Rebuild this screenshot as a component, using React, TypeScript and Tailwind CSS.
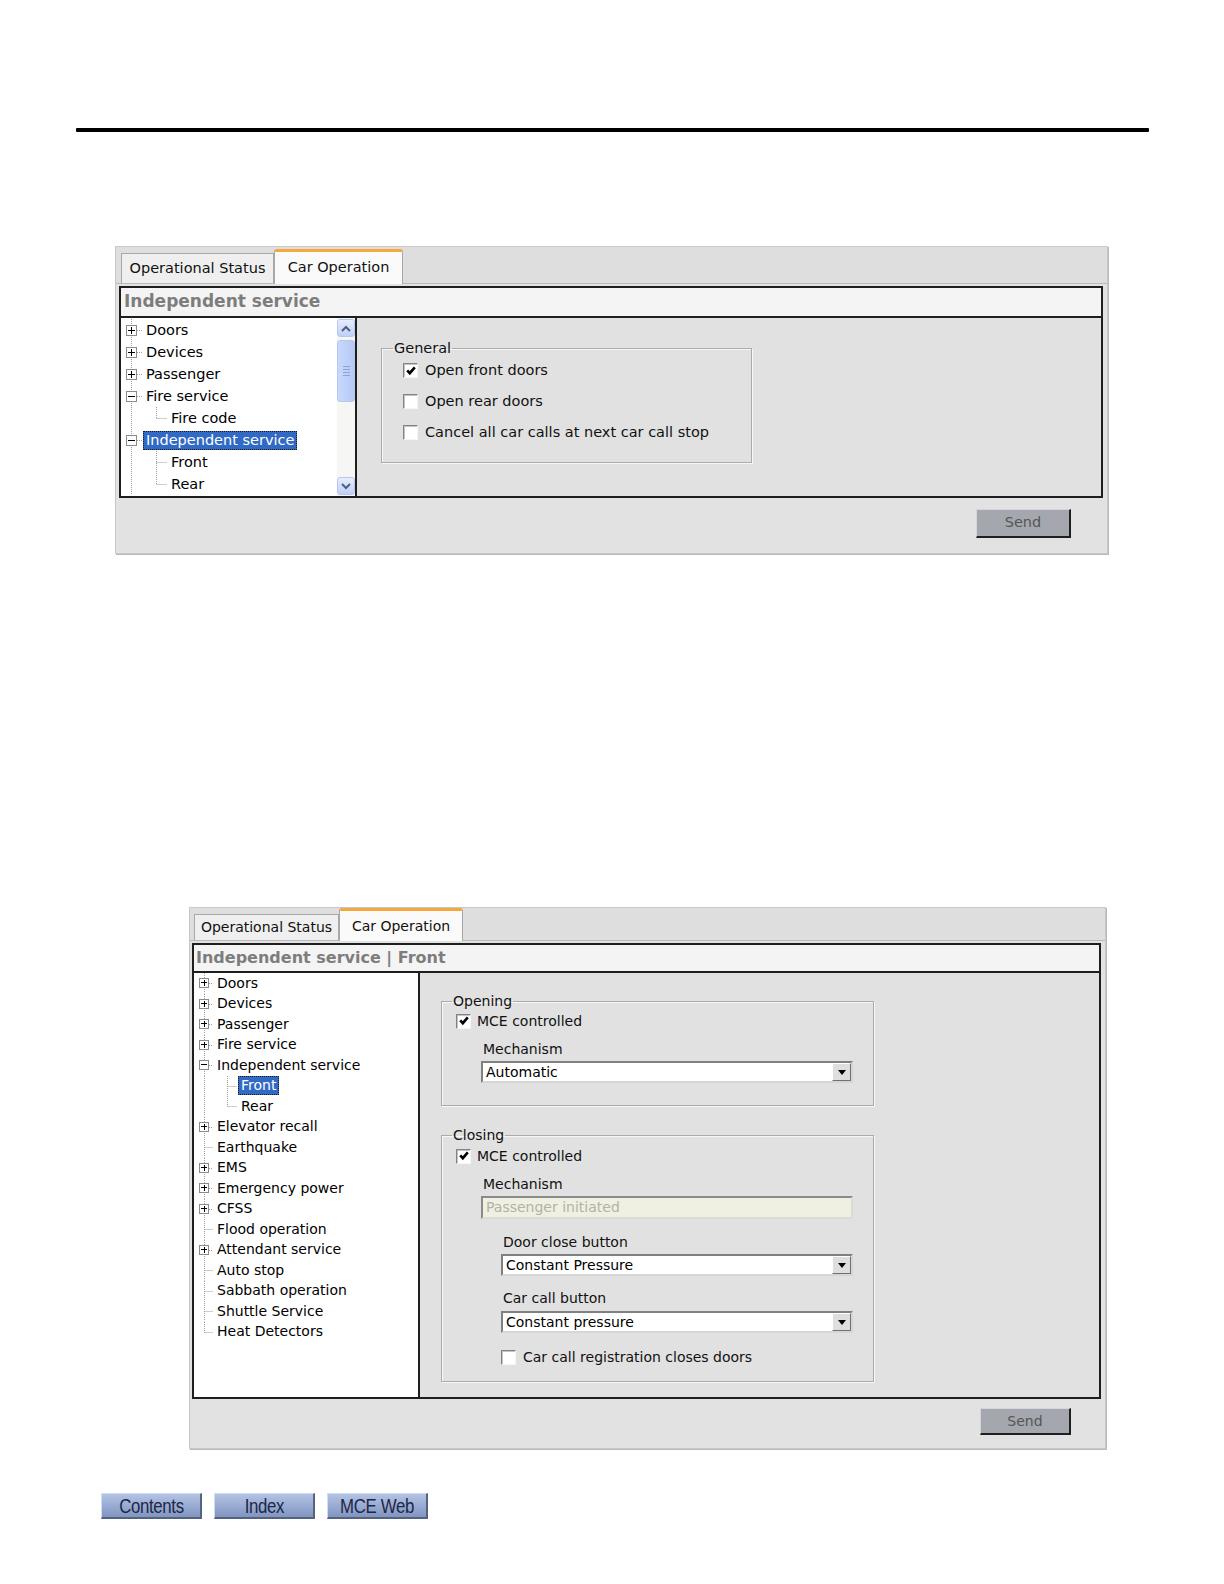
import React from 'react'

type Node = {
  label: string
  level: 0 | 1
  exp?: '+' | '-'
  lastChild?: boolean
  last?: boolean
  selected?: boolean
}

const treeA: Node[] = [
  { label: 'Doors', level: 0, exp: '+' },
  { label: 'Devices', level: 0, exp: '+' },
  { label: 'Passenger', level: 0, exp: '+' },
  { label: 'Fire service', level: 0, exp: '-' },
  { label: 'Fire code', level: 1, lastChild: true },
  { label: 'Independent service', level: 0, exp: '-', selected: true },
  { label: 'Front', level: 1 },
  { label: 'Rear', level: 1, lastChild: true },
]

const treeB: Node[] = [
  { label: 'Doors', level: 0, exp: '+' },
  { label: 'Devices', level: 0, exp: '+' },
  { label: 'Passenger', level: 0, exp: '+' },
  { label: 'Fire service', level: 0, exp: '+' },
  { label: 'Independent service', level: 0, exp: '-' },
  { label: 'Front', level: 1, selected: true },
  { label: 'Rear', level: 1, lastChild: true },
  { label: 'Elevator recall', level: 0, exp: '+' },
  { label: 'Earthquake', level: 0 },
  { label: 'EMS', level: 0, exp: '+' },
  { label: 'Emergency power', level: 0, exp: '+' },
  { label: 'CFSS', level: 0, exp: '+' },
  { label: 'Flood operation', level: 0 },
  { label: 'Attendant service', level: 0, exp: '+' },
  { label: 'Auto stop', level: 0 },
  { label: 'Sabbath operation', level: 0 },
  { label: 'Shuttle Service', level: 0 },
  { label: 'Heat Detectors', level: 0, last: true },
]

type Dims = { h: number; box: number; p0: number; p1: number; cx: number }

const dimsA: Dims = { h: 22, box: 11, p0: 17, p1: 42, cx: 30.5 }
const dimsB: Dims = { h: 20.5, box: 10, p0: 15, p1: 39, cx: 28.5 }

const DOT = '#9c9c9c'

const Connector = ({ n, d }: { n: Node; d: Dims }) => {
  const w = n.level === 0 ? d.p0 : d.p1
  const c = Math.floor(d.h / 2) + 0.5
  const bx = Math.floor(d.box / 2) + 0.5
  const top = Math.round(d.h / 2 - d.box / 2) + 0.5
  const mid = top + Math.floor((d.box - 1) / 2)
  return (
    <svg width={w} height={d.h} className="shrink-0 block">
      <line x1={bx} y1={0} x2={bx} y2={n.last ? c : d.h} stroke={DOT} strokeDasharray="1 1" />
      {n.level === 1 && (
        <>
          <line x1={d.cx} y1={0} x2={d.cx} y2={n.lastChild ? c : d.h} stroke={DOT} strokeDasharray="1 1" />
          <line x1={d.cx} y1={c} x2={w - 1} y2={c} stroke={DOT} strokeDasharray="1 1" />
        </>
      )}
      {n.level === 0 && (
        <line x1={n.exp ? d.box : bx} y1={c} x2={w - 1} y2={c} stroke={DOT} strokeDasharray="1 1" />
      )}
      {n.exp && (
        <g>
          <rect x={0.5} y={top} width={d.box - 1} height={d.box - 1} fill="#fff" stroke="#8a8a8a" />
          <line x1={2} y1={mid} x2={d.box - 2} y2={mid} stroke="#000" />
          {n.exp === '+' && (
            <line x1={bx} y1={top + 1.5} x2={bx} y2={top + d.box - 2.5} stroke="#000" />
          )}
        </g>
      )}
    </svg>
  )
}

const Tree = ({ nodes, d, text, rowCls }: { nodes: Node[]; d: Dims; text: string; rowCls: string }) => (
  <div className={`pl-[5px] ${text}`}>
    {nodes.map((n) => (
      <div key={n.label + n.level} className={`flex items-center ${rowCls}`}>
        <Connector n={n} d={d} />
        <span
          className={`px-[2px] border border-dotted leading-[17px] whitespace-nowrap ${
            n.selected ? 'bg-[#316ac5] text-white border-[#1a1a1a]' : 'border-transparent text-black'
          }`}
        >
          {n.label}
        </span>
      </div>
    ))}
  </div>
)

const Check = ({ checked, cls }: { checked?: boolean; cls: string }) => (
  <span
    className={`${cls} shrink-0 flex items-center justify-center bg-white border border-t-[#828282] border-l-[#828282] border-b-[#f6f6f6] border-r-[#f6f6f6] shadow-[inset_1px_1px_0_#c4c4c4]`}
  >
    {checked && (
      <svg viewBox="0 0 10 10" className="w-[10px] h-[10px]">
        <path d="M1.2 4.4 L3.8 7.2 L8.8 1.4" fill="none" stroke="#000" strokeWidth="2.6" />
      </svg>
    )}
  </span>
)

const Select = ({ value, cls }: { value: string; cls: string }) => (
  <div
    className={`${cls} h-[22px] flex items-center bg-white border-2 border-t-[#808080] border-l-[#808080] border-b-[#d6d6d6] border-r-[#d6d6d6]`}
  >
    <span className="flex-1 pl-[3px] text-[14px] text-black">{value}</span>
    <span className="w-[19px] h-[18px] flex items-center justify-center bg-[#dedede] border border-t-white border-l-white border-b-[#707070] border-r-[#707070]">
      <svg width="8" height="5" className="block">
        <path d="M0 0h8L4 5z" fill="#000" />
      </svg>
    </span>
  </div>
)

const Scrollbar = () => (
  <div className="w-[18px] shrink-0 bg-[#f6f6f4] flex flex-col pt-[1px] pb-[1px]">
    <div className="h-[18px] rounded-[3px] border border-[#b6c8f2] bg-linear-to-b from-[#e6edfd] to-[#bfd0f8] flex items-center justify-center">
      <svg width="10" height="7">
        <path d="M1 6 L5 2 L9 6" fill="none" stroke="#4d6185" strokeWidth="2" />
      </svg>
    </div>
    <div className="mt-[3px] h-[62px] rounded-[3px] border border-[#b6c8f2] bg-linear-to-r from-[#c9d8fc] to-[#b6c9f6] flex flex-col items-center justify-center gap-[2px]">
      <span className="w-[7px] h-px bg-[#8ea4d8]" />
      <span className="w-[7px] h-px bg-[#8ea4d8]" />
      <span className="w-[7px] h-px bg-[#8ea4d8]" />
      <span className="w-[7px] h-px bg-[#8ea4d8]" />
    </div>
    <div className="flex-1" />
    <div className="h-[18px] rounded-[3px] border border-[#b6c8f2] bg-linear-to-b from-[#e6edfd] to-[#bfd0f8] flex items-center justify-center">
      <svg width="10" height="7">
        <path d="M1 1 L5 5 L9 1" fill="none" stroke="#4d6185" strokeWidth="2" />
      </svg>
    </div>
  </div>
)

const NavButton = ({ label, w }: { label: string; w: string }) => (
  <div
    className={`${w} h-[26px] flex items-center justify-center bg-linear-to-b from-[#b3c3e4] to-[#8195c2] border border-t-[#d2dcf1] border-l-[#d2dcf1] border-b-2 border-r-2 border-b-[#56637f] border-r-[#56637f] text-[#1d2744] text-[20px] font-['Liberation_Sans_Narrow','Liberation_Sans',Arial,sans-serif]`}
  >
    <span className="inline-block scale-x-[0.84] tracking-[-0.4px]">{label}</span>
  </div>
)

export default function App() {
  return (
    <div className="w-[1224px] min-h-[1584px] bg-white font-['DejaVu_Sans',Verdana,sans-serif] pt-[128px]">
      <div className="ml-[76px] w-[1073px] h-[4px] bg-black rounded-[1px]" />

      {/* first capture */}
      <div className="ml-[115px] mt-[114px] w-[993px] h-[308px] flex flex-col bg-[#e2e2e2] border border-[#c8c8c8] shadow-[1px_1px_0_#b9b9b9]">
        <div className="h-[37px] shrink-0 flex items-end pl-[5px] bg-[#dedede] border-b border-[#bababa]">
          <div className="h-[30px] w-[153px] flex items-center justify-center bg-[#efefef] border border-b-0 border-[#a8a8a8] text-[14.5px] text-[#111]">
            Operational Status
          </div>
          <div className="h-[35px] w-[129px] -mb-px flex items-center justify-center bg-[#fafafa] border-x border-[#a8a8a8] border-t-[3px] border-t-[#f2a83a] rounded-t-[3px] text-[14.5px] text-[#111]">
            Car Operation
          </div>
        </div>
        <div className="ml-[3px] mr-[4px] mt-[2px] border-2 border-[#1e1e1e] flex flex-col">
          <div className="h-[30px] flex items-center pl-[3px] bg-[#f4f4f4] border-b-2 border-[#1e1e1e] text-[17px] font-bold text-[#7d7d7d]">
            Independent service
          </div>
          <div className="h-[178px] flex">
            <div className="w-[236px] flex bg-white border-r-2 border-[#1e1e1e] overflow-hidden">
              <div className="flex-1 pt-[1px] overflow-hidden">
                <Tree nodes={treeA} d={dimsA} text="text-[14.5px]" rowCls="h-[22px]" />
              </div>
              <Scrollbar />
            </div>
            <div className="flex-1 bg-[#e1e1e1] pl-[24px] pt-[22px]">
              <fieldset className="w-[371px] pl-[11px] pb-[21px] border border-[#ababab] shadow-[inset_1px_1px_0_#f7f7f7,1px_1px_0_#f7f7f7] text-[14.5px] text-[#111]">
                <legend className="px-[1px] leading-[17px]">General</legend>
                <div className="flex items-center h-[17px] mt-[5px] ml-[10px]">
                  <Check checked cls="w-[15px] h-[15px]" />
                  <span className="ml-[7px]">Open front doors</span>
                </div>
                <div className="flex items-center h-[17px] mt-[14px] ml-[10px]">
                  <Check cls="w-[15px] h-[15px]" />
                  <span className="ml-[7px]">Open rear doors</span>
                </div>
                <div className="flex items-center h-[17px] mt-[14px] ml-[10px]">
                  <Check cls="w-[15px] h-[15px]" />
                  <span className="ml-[7px]">Cancel all car calls at next car call stop</span>
                </div>
              </fieldset>
            </div>
          </div>
        </div>
        <div className="flex justify-end pr-[36px] pt-[11px]">
          <button className="w-[95px] h-[29px] bg-[#a4a8ae] border border-b-2 border-r-2 border-t-[#d2d5d9] border-l-[#d2d5d9] border-b-[#1f1f1f] border-r-[#1f1f1f] text-[14.5px] text-[#555]">
            Send
          </button>
        </div>
      </div>

      {/* second capture */}
      <div className="ml-[189px] mt-[353px] w-[917px] h-[542px] flex flex-col bg-[#e2e2e2] border border-[#c8c8c8] shadow-[1px_1px_0_#b9b9b9]">
        <div className="h-[33px] shrink-0 flex items-end pl-[4px] bg-[#dedede] border-b border-[#bababa]">
          <div className="h-[26px] w-[145px] flex items-center justify-center bg-[#efefef] border border-b-0 border-[#a8a8a8] text-[14px] text-[#111]">
            Operational Status
          </div>
          <div className="h-[33px] w-[124px] -mb-px flex items-center justify-center bg-[#fafafa] border-x border-[#a8a8a8] border-t-[3px] border-t-[#f2a83a] rounded-t-[3px] text-[14px] text-[#111]">
            Car Operation
          </div>
        </div>
        <div className="ml-[2px] mr-[4px] mt-[2px] border-2 border-[#1e1e1e] flex flex-col">
          <div className="h-[28px] flex items-center pl-[2px] bg-[#f4f4f4] border-b-2 border-[#1e1e1e] text-[16px] font-bold text-[#7d7d7d]">
            Independent service | Front
          </div>
          <div className="h-[424px] flex">
            <div className="w-[226px] bg-white border-r-2 border-[#1e1e1e] overflow-hidden">
              <Tree nodes={treeB} d={dimsB} text="text-[14px]" rowCls="h-[20.5px]" />
            </div>
            <div className="flex-1 bg-[#e1e1e1] pl-[21px] pt-[20px] text-[14px] text-[#111]">
              <fieldset className="w-[433px] pl-[10px] pr-[20px] pb-[22px] border border-[#ababab] shadow-[inset_1px_1px_0_#f7f7f7,1px_1px_0_#f7f7f7]">
                <legend className="px-[1px] leading-[16px]">Opening</legend>
                <div className="flex items-center h-[16px] mt-[4px] ml-[4px]">
                  <Check checked cls="w-[15px] h-[15px]" />
                  <span className="ml-[6px]">MCE controlled</span>
                </div>
                <div className="leading-[16px] mt-[12px] ml-[31px]">Mechanism</div>
                <Select value="Automatic" cls="mt-[4px] ml-[29px]" />
              </fieldset>

              <fieldset className="mt-[21px] w-[433px] pl-[10px] pr-[20px] pb-[16px] border border-[#ababab] shadow-[inset_1px_1px_0_#f7f7f7,1px_1px_0_#f7f7f7]">
                <legend className="px-[1px] leading-[16px]">Closing</legend>
                <div className="flex items-center h-[16px] mt-[5px] ml-[4px]">
                  <Check checked cls="w-[15px] h-[15px]" />
                  <span className="ml-[6px]">MCE controlled</span>
                </div>
                <div className="leading-[16px] mt-[12px] ml-[31px]">Mechanism</div>
                <div className="mt-[4px] ml-[29px] h-[23px] flex items-center pl-[3px] bg-[#efefe2] border-2 border-t-[#8a8a8a] border-l-[#8a8a8a] border-b-[#dcdcd2] border-r-[#dcdcd2] text-[#b3b3a3]">
                  Passenger initiated
                </div>
                <div className="leading-[16px] mt-[15px] ml-[51px]">Door close button</div>
                <Select value="Constant Pressure" cls="mt-[4px] ml-[49px]" />
                <div className="leading-[16px] mt-[14px] ml-[51px]">Car call button</div>
                <Select value="Constant pressure" cls="mt-[5px] ml-[49px]" />
                <div className="flex items-center h-[16px] mt-[16px] ml-[49px]">
                  <Check cls="w-[15px] h-[15px]" />
                  <span className="ml-[7px]">Car call registration closes doors</span>
                </div>
              </fieldset>
            </div>
          </div>
        </div>
        <div className="flex justify-end pr-[34px] pt-[9px]">
          <button className="w-[91px] h-[27px] bg-[#a4a8ae] border border-b-2 border-r-2 border-t-[#d2d5d9] border-l-[#d2d5d9] border-b-[#1f1f1f] border-r-[#1f1f1f] text-[14px] text-[#555]">
            Send
          </button>
        </div>
      </div>

      {/* footer navigation */}
      <div className="ml-[101px] mt-[44px] flex gap-[12px]">
        <NavButton label="Contents" w="w-[101px]" />
        <NavButton label="Index" w="w-[101px]" />
        <NavButton label="MCE Web" w="w-[101px]" />
      </div>
    </div>
  )
}
